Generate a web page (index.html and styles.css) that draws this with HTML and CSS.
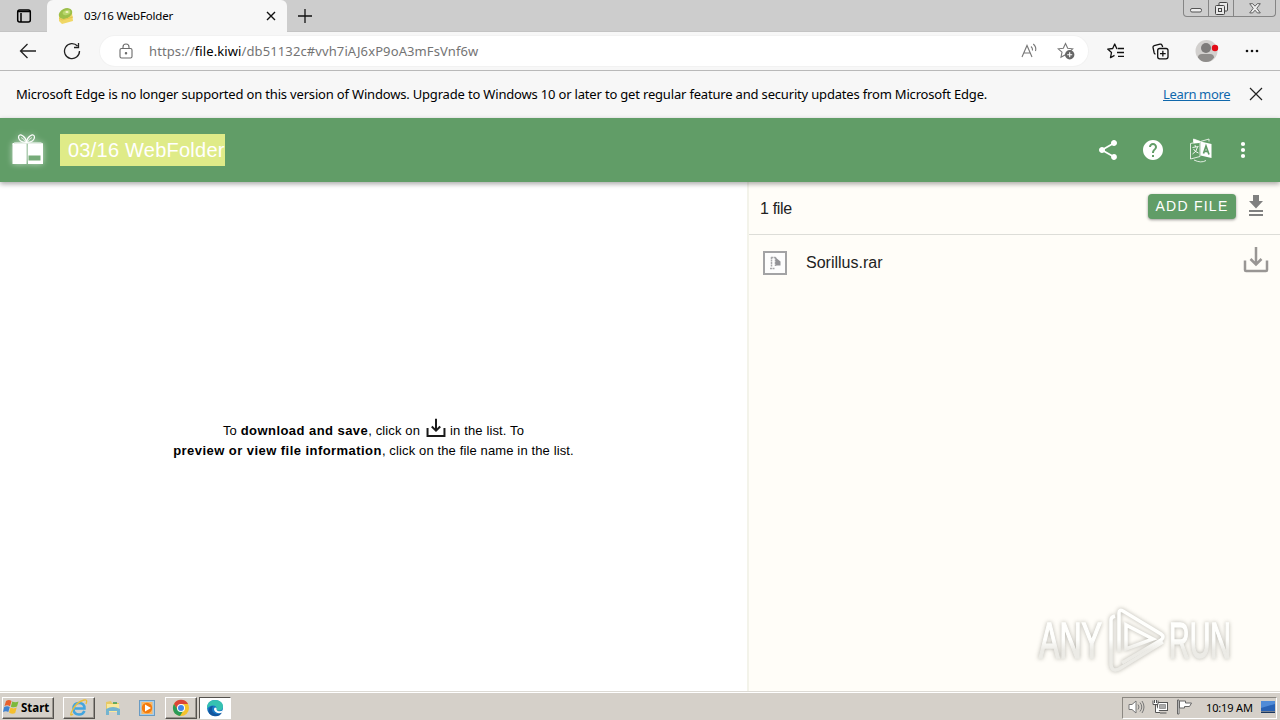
FILE: index.html
```
<!DOCTYPE html>
<html lang="en">
<head>
  <meta charset="UTF-8">
  <meta name="viewport" content="width=device-width, initial-scale=1.0">
  <title>03/16 WebFolder</title>
  <link rel="stylesheet" href="styles.css">
</head>
<body>
  <!-- Browser tabs -->
  <div class="tab-strip">
    <button class="tab-actions" aria-label="Tab actions">
      <svg width="16" height="16" viewBox="0 0 16 16" fill="none" stroke="#000" stroke-width="1.5">
        <rect x="1.7" y="2" width="12.6" height="12" rx="2"/>
        <path d="M2 3.5h12M5 5v9"/>
      </svg>
    </button>
    <div class="tab">
      <svg class="favicon" width="18" height="18" viewBox="0 0 18 18">
        <path d="M2 9L15 6l1 8-11 3-3-3z" fill="#f0d765"/>
        <ellipse cx="8.500" cy="6.500" rx="7" ry="5" transform="rotate(-25 8.500 6.500)" fill="#9cbf4a"/>
        <ellipse cx="9.500" cy="5.500" rx="4" ry="2.500" transform="rotate(-20 9.500 5.500)" fill="#b8d66c"/>
        <ellipse cx="10" cy="5" rx="1.600" ry="1" fill="#f4f5c4"/>
        <path d="M2 11l3 2 11-3" fill="none" stroke="#e2c44f"/>
      </svg>
      <span class="tab-title">03/16 WebFolder</span>
      <svg class="tab-close" width="10" height="10" viewBox="0 0 10 10" stroke="#111" stroke-width="1.4">
        <path d="M1 1l8 8M9 1L1 9"/>
      </svg>
    </div>
    <svg class="new-tab" width="16" height="16" viewBox="0 0 16 16" stroke="#111" stroke-width="1.3">
      <path d="M8 1v14M1 8h14"/>
    </svg>
    <div class="window-controls">
      <span class="control">
        <svg width="12" height="12" viewBox="0 0 12 12"><rect x=".5" y="6.5" width="11" height="3.5" rx="1.5" fill="#eee" stroke="#555"/></svg>
      </span>
      <span class="control">
        <svg width="13" height="13" viewBox="0 0 13 13" fill="#e8e8e8" stroke="#444"><rect x="4" y=".5" width="8.5" height="8.5" rx="1"/><rect x=".5" y="3.5" width="9" height="9" rx="1"/><rect x="3.5" y="6.5" width="3" height="3"/></svg>
      </span>
      <span class="control control-close">
        <svg width="12" height="11" viewBox="0 0 12 11"><path d="M.7.7h3L6 3.2 8.3.7h3L7.8 5.3l3.5 4.6h-3L6 7.2 3.700 9.900h-3L4.200 5.300z" fill="#eee" stroke="#555" stroke-width=".9"/></svg>
      </span>
    </div>
  </div>

  <!-- Toolbar with address bar -->
  <div class="toolbar">
    <svg class="nav-back" width="18" height="16" viewBox="0 0 18 16" fill="none" stroke="#222" stroke-width="1.3">
      <path d="M17 8H1.500M8.500 1L1.500 8l7 7"/>
    </svg>
    <svg class="nav-reload" width="18" height="18" viewBox="0 0 18 18" fill="none" stroke="#222" stroke-width="1.3">
      <path d="M14.500 4A7.500 7.500 0 1 0 16.500 9M15.500 1v4.500H11"/>
    </svg>
    <div class="address-bar">
      <svg class="lock" width="14" height="16" viewBox="0 0 14 16" fill="none" stroke="#6b6b6b" stroke-width="1.1">
        <rect x="1" y="5.500" width="12" height="9.500" rx="1.500"/>
        <path d="M4 5.500V4a3 3 0 0 1 6 0v1.500"/>
        <circle cx="7" cy="10.200" r=".7" fill="#6b6b6b"/>
      </svg>
      <span class="url">https://<b>file.kiwi</b>/db51132c#vvh7iAJ6xP9oA3mFsVnf6w</span>
      <svg class="read-aloud" width="17" height="16" viewBox="0 0 17 16" fill="none" stroke="#777" stroke-width="1.100">
        <path d="M1 14L6 2.500 11 14M2.800 10h6.400M10 3.500q1.800 1.500 1.500 4M12.300 1q3.400 3 2.200 7"/>
      </svg>
      <svg class="add-favorite" width="18" height="18" viewBox="0 0 18 18">
        <path d="M8.500 1.500l2.200 4.700 5 .6-3.700 3.400 1 5-4.500-2.500L4 15.200l1-5L1.200 6.800l5.100-.6z" fill="none" stroke="#777" stroke-width="1.100"/>
        <circle cx="12.700" cy="12.700" r="4.700" fill="#666"/>
        <path d="M12.700 10.200v5M10.200 12.700h5" stroke="#fff" stroke-width="1.100"/>
      </svg>
    </div>
    <svg class="favorites" width="18" height="16" viewBox="0 0 18 16" fill="none" stroke="#111" stroke-width="1.300" stroke-linejoin="round">
      <path d="M10.500 5.500h-.8L7.700 1 5.700 5.500l-5 .6L4.500 9.500l-1 5.200 4-2.300M11 5.500h6M10 9.500h7M11 13.300h6"/>
    </svg>
    <svg class="collections" width="17" height="17" viewBox="0 0 17 17" fill="none" stroke="#111" stroke-width="1.300">
      <path d="M3.500 11.200Q2.500 11 2.200 10L1 4.500Q.8 3 2.200 2.600L8 1.200q1.500-.3 2 1L10.700 4"/>
      <rect x="5.700" y="5.500" width="10.300" height="10.300" rx="2"/>
      <path d="M10.850 7.800v5.700M8 10.650h5.700"/>
    </svg>
    <svg class="profile" width="24" height="24" viewBox="0 0 24 24">
      <circle cx="11.500" cy="12" r="11" fill="#d2d0ce"/>
      <circle cx="11" cy="9" r="5" fill="#7d7b7a"/>
      <path d="M3 18.500q0-3.500 4-3.500h8q4 0 4 3.500-3 4.500-8 4.500t-8-4.500" fill="#8f8d8b"/>
      <circle cx="20" cy="9" r="3.200" fill="#e30b16"/>
    </svg>
    <svg class="more" width="14" height="4" viewBox="0 0 14 4" fill="#111">
      <circle cx="2" cy="2" r="1.300"/><circle cx="7" cy="2" r="1.300"/><circle cx="12" cy="2" r="1.300"/>
    </svg>
  </div>

  <div class="infobar">
    <span class="infobar-text">Microsoft Edge is no longer supported on this version of Windows. Upgrade to Windows 10 or later to get regular feature and security updates from Microsoft Edge.</span>
    <a class="infobar-link" href="#">Learn more</a>
    <svg class="infobar-close" width="14" height="14" viewBox="0 0 14 14" stroke="#222" stroke-width="1.200">
      <path d="M1 1l12 12M13 1L1 13"/>
    </svg>
  </div>

  <!-- Page header -->
  <header class="app-header">
    <svg class="gift-logo" width="36" height="36" viewBox="0 0 36 36">
      <path d="M2.500 11.500h14V32h-14zM18 11.500h15V32H18z" fill="#fff"/>
      <path d="M2.500 12l2-1h27l1 1" stroke="#fff" fill="none"/>
      <path d="M16.500 10.500q-8-.5-8-5.500.5-3.500 4.500-1 3 2 3.500 6.500.5-4.500 3.500-6.500 4-2.500 4.500 1 0 5-8 5.500" fill="none" stroke="#fff" stroke-width="1.200"/>
      <path d="M11 5.500q3 1 5 5M22 5.500q-3 1-5 5" fill="none" stroke="#fff" stroke-width=".7"/>
      <rect x="18.500" y="23.500" width="12" height="5" fill="#76ab79"/>
    </svg>
    <h1 class="folder-name">03/16 WebFolder</h1>
    <svg class="share" width="24" height="24" viewBox="0 0 24 24" fill="#fff">
      <path d="M18 16.080c-.76 0-1.440.3-1.960.77L8.910 12.700c.05-.23.09-.46.09-.7s-.04-.47-.09-.7l7.050-4.110c.54.5 1.250.81 2.040.81 1.660 0 3-1.340 3-3s-1.340-3-3-3-3 1.340-3 3c0 .24.04.47.09.7L8.040 9.810C7.500 9.310 6.790 9 6 9c-1.660 0-3 1.340-3 3s1.340 3 3 3c.79 0 1.500-.31 2.040-.81l7.120 4.160c-.05.21-.08.43-.08.65 0 1.610 1.310 2.920 2.920 2.920s2.920-1.310 2.920-2.920-1.310-2.920-2.920-2.920z"/>
    </svg>
    <svg class="help" width="24" height="24" viewBox="0 0 24 24" fill="#fff">
      <path d="M12 2C6.480 2 2 6.480 2 12s4.480 10 10 10 10-4.480 10-10S17.520 2 12 2zm1 17h-2v-2h2v2zm2.070-7.750l-.9.920C13.450 12.900 13 13.500 13 15h-2v-.5c0-1.100.45-2.100 1.170-2.830l1.240-1.260c.37-.36.59-.86.59-1.410 0-1.100-.9-2-2-2s-2 .9-2 2H8c0-2.210 1.790-4 4-4s4 1.790 4 4c0 .88-.36 1.680-.93 2.250z"/>
    </svg>
    <svg class="translate" width="24" height="26" viewBox="0 0 24 26">
      <path d="M1.500 6.500L11 4.500v15l-9.500 2.500zM4.500 5V2l7 2.500L20 2v2.500M5 23q7 3.500 12 .5" fill="none" stroke="#fff" stroke-width=".8"/>
      <path d="M4.500 2l7 2.500-1 1.500-6 .5z" fill="#fff"/>
      <path d="M11.500 4.500L22.500 7v14l-11-2.500z" fill="#fff"/>
      <path d="M3.500 10.500l6-1M6 8l.5 2M8.500 10q-1 5-5 7M4.500 12q1.500 3 5 4" fill="none" stroke="#fff" stroke-width=".9"/>
      <path d="M14.500 16.500L17 9l3 8.500M15.500 14.200l3.500.5" fill="none" stroke="#619b66" stroke-width="1.700"/>
    </svg>
    <svg class="menu" width="6" height="18" viewBox="0 0 6 18" fill="#fff">
      <circle cx="3" cy="3" r="2.100"/><circle cx="3" cy="9" r="2.100"/><circle cx="3" cy="15" r="2.100"/>
    </svg>
  </header>

  <main class="content">
    <section class="preview">
      <p class="hint">
        <span class="hint-line"><span>To <b>download and save</b>, click on</span>
          <svg class="hint-icon" width="20" height="20" viewBox="0 0 26 26" fill="none" stroke="#1a1a1a" stroke-width="2.600">
            <path d="M2 13v10.500h22V13M13 1v15M7.500 11l5.500 5.500 5.500-5.500"/>
          </svg>
          <span>in the list. To</span></span>
        <span class="hint-line"><span><b>preview or view file information</b>, click on the file name in the list.</span></span>
      </p>
    </section>

    <section class="files">
      <div class="files-head">
        <span class="count">1 file</span>
        <button class="add-file">ADD FILE</button>
        <svg class="download-all" width="16" height="22" viewBox="0 0 16 22" fill="#808080">
          <path d="M5 0h6v6h4l-7 7.500L1 6h4zM1 15h14v2H1zM1 19h14v2H1z"/>
        </svg>
      </div>
      <div class="file-row">
        <svg class="file-icon" width="24" height="24" viewBox="0 0 24 24">
          <rect x="1" y="1" width="22" height="22" fill="#fdfdfd" stroke="#a3a3a5" stroke-width="2"/>
          <path d="M8.500 6v10M7 17.500h5M8 6.500h4.500M12.500 6v9" stroke="#a7a7aa" stroke-width="1.500" stroke-dasharray="2 .5" fill="none"/>
          <path d="M12.500 6.500l5 4v4h-5z" fill="#929296"/>
        </svg>
        <span class="file-name">Sorillus.rar</span>
        <svg class="download" width="26" height="26" viewBox="0 0 26 26" fill="none" stroke="#999694" stroke-width="2.500">
          <path d="M2 13.500v9.500q0 1 1 1h20q1 0 1-1v-9.500M13 0v17M7.500 12l5.500 5.500 5.500-5.500"/>
        </svg>
      </div>
    </section>
  </main>

  <svg class="watermark" width="214" height="72" viewBox="0 0 214 72">
    <defs>
      <linearGradient id="fade" x1="0" y1="0" x2="0" y2="72" gradientUnits="userSpaceOnUse">
        <stop offset=".45" stop-color="#fffffd"/>
        <stop offset=".6" stop-color="#ecebe6"/>
      </linearGradient>
    </defs>
    <g class="watermark-text">
      <text x="5" y="51" textLength="63" lengthAdjust="spacingAndGlyphs">ANY</text>
      <text x="135" y="51" textLength="62" lengthAdjust="spacingAndGlyphs">RUN</text>
    </g>
    <path class="watermark-mark" d="M77 54V13q0-3 4-4M85 45V6q0-4 4-2l38 23q4 3 0 6L88 56M92 42V18l27 14z"/>
    <path class="watermark-mark" d="M77 54v4q1 7 8 4l44-27"/>
  </svg>

  <!-- Windows taskbar -->
  <footer class="taskbar">
    <button class="start">
      <svg width="17" height="16" viewBox="0 0 17 16">
        <path d="M3 2q3-2 5.500 0L7 7.300Q4.500 5.500 1.500 7z" fill="#e8602c"/>
        <path d="M9.300 2.400q3 1.600 6.200 0L14 7.500q-3 1.500-6.200.2z" fill="#7db93c"/>
        <path d="M1.200 8q3-1.700 5.600 0L5.300 13Q3 11.500 0 13z" fill="#3f82d0"/>
        <path d="M7.500 8.600q3 1.600 6.200 0L12.200 14q-3 1.500-6.200-.6z" fill="#f5bf2e"/>
      </svg>
      <span>Start</span>
    </button>
    <button class="task task-ie" aria-label="Internet Explorer">
      <svg width="18" height="18" viewBox="0 0 18 18" fill="none">
        <path d="M14.500 12q-1.500 3.500-5.500 3.500-5.500 0-5.500-6Q3.500 4 9 4t5.500 5.500H5" stroke="#43a5df" stroke-width="2.500"/>
        <path d="M3 15q-4 3-1-3Q6 3 14 1q4-1 2 4" stroke="#e9bd3a" stroke-width="1.300"/>
      </svg>
    </button>
    <span class="task task-explorer">
      <svg width="18" height="18" viewBox="0 0 18 18">
        <path d="M2 3l5-1 1 2h7v9H2z" fill="#e7c965"/>
        <path d="M3 5h12v8H3z" fill="#f9e89c"/>
        <path d="M2 10q7-4 14 0v6h-3v-4H5v4H2z" fill="#74b4cf"/>
        <path d="M9 4h4" stroke="#3a9d52" stroke-width="1.500"/>
      </svg>
    </span>
    <span class="task task-player">
      <svg width="18" height="18" viewBox="0 0 18 18">
        <rect x="1.500" y="1.500" width="15" height="15" fill="#a8cde9" stroke="#699bc3"/>
        <rect x="3.500" y="3" width="11" height="12" fill="#f9b765"/>
        <circle cx="9" cy="9" r="5.200" fill="#f47b0c"/>
        <path d="M7 5.500l6 3.500-6 3.500z" fill="#fff"/>
      </svg>
    </span>
    <button class="task task-chrome" aria-label="Chrome">
      <svg width="18" height="18" viewBox="0 0 18 18">
        <circle cx="9" cy="9" r="8" fill="#f5c32c"/>
        <path d="M2 5a8 8 0 0 1 14 0H9L6 11z" fill="#db4437"/>
        <path d="M2 5a8 8 0 0 0 6 12l4-6.500-6 .5z" fill="#2a9b57"/>
        <circle cx="9" cy="9" r="4" fill="#fff"/>
        <circle cx="9" cy="9" r="3" fill="#4285e8"/>
      </svg>
    </button>
    <button class="task task-edge active" aria-label="Edge">
      <svg width="18" height="18" viewBox="0 0 18 18">
        <circle cx="9" cy="9" r="8" fill="#1778c5"/>
        <path d="M1 8Q2 1 9 1q7.500 0 8 6.500 0 4-4 4-3 0-2.500-2 0-3-3.500-3-4 0-6 3.500z" fill="#36c2b1"/>
        <path d="M7 7q-3 5 2 7.500 3 1.500 7-1-3 5-8.500 3.500Q1 15 3 10q1-3 4-3" fill="#13569e"/>
        <path d="M10.500 9q-.5 3 2.500 3.300 2.500.2 4-1.300l-1 2.500q-4 2-7-1-2-2.500 0-4z" fill="#fff"/>
      </svg>
    </button>
    <div class="tray">
      <svg class="tray-volume" width="17" height="16" viewBox="0 0 17 16" stroke="#777" fill="none">
        <path d="M1 5.500h3L8 2v12l-4-3.500H1z" fill="#fff"/>
        <path d="M10 5.500q2 2.500 0 5M12 3.500q3.500 4.500 0 9M14 2q4 6 0 12"/>
      </svg>
      <svg class="tray-network" width="17" height="16" viewBox="0 0 17 16" stroke="#555" fill="#fff">
        <rect x="5.500" y="3.500" width="10" height="8"/>
        <path d="M7.500 5.500h6v4h-6z" fill="#aaa" stroke="#999"/>
        <path d="M8 14h6.500M1 1.500v4h5v-4M3.500 5.500v8H8"/>
        <path d="M2.500 1v3M4.500 1v3"/>
      </svg>
      <svg class="tray-flag" width="17" height="16" viewBox="0 0 17 16" stroke="#666" fill="#fff">
        <path d="M1.500 1h1.500v14H1.500zM3.500 2h6v2h6l-2 3.500H8.500v1.500h-5z"/>
      </svg>
      <span class="clock">10:19 AM</span>
      <svg class="show-desktop" width="16" height="14" viewBox="0 0 16 14">
        <path d="M1 1h14v10H1z" fill="#2862b5"/>
        <path d="M1 1h14v3L1 8z" fill="#4f8bd8"/>
        <path d="M1 11.500h14v1.500H1z" fill="#18365f"/>
      </svg>
    </div>
  </footer>
</body>
</html>
```
FILE: styles.css
```
:root {
  --green: #619d67;
  --cream: #fffdf8;
  --chrome: #f7f7f7;
  --strip: #cdcdcd;
  --taskbar: #d5d0c9;
}

* {
  margin: 0;
  padding: 0;
  box-sizing: border-box;
}

body {
  width: 1280px;
  height: 720px;
  overflow: hidden;
  display: flex;
  flex-direction: column;
  background: white;
  color: #000;
  font-family: "Liberation Sans", Arial, sans-serif;
}

svg {
  display: block;
  flex: none;
}

button {
  border: none;
  background: none;
  font: inherit;
}

span, a, h1 {
  white-space: nowrap;
}

/* Browser chrome */
.tab-strip,
.toolbar,
.infobar {
  flex: none;
  display: flex;
  align-items: center;
  font-family: "Noto Sans", "Open Sans", sans-serif;
}

.tab-strip {
  height: 32px;
  background: var(--strip);
  border-bottom: 1px solid #c4c4c4;
}

.tab-actions {
  margin-left: 16px;
}

.tab {
  width: 240px;
  height: 32px;
  margin: 0 0 -1px 15px;
  padding-left: 10px;
  display: flex;
  align-items: center;
  background: var(--chrome);
  border-radius: 6px 6px 0 0;
}

.tab-title {
  width: 182px;
  margin: -2px 0 0 9px;
  font-size: 11.5px;
  letter-spacing: -0.18px;
}

.new-tab {
  margin-left: 10px;
}

.window-controls {
  display: flex;
  align-self: flex-start;
  height: 17px;
  margin: 0 4px 0 auto;
  border: 1px solid #858585;
  border-top: none;
  border-radius: 0 0 4px 4px;
}

.control {
  width: 25px;
  display: grid;
  place-items: center;
  border-right: 1px solid #858585;
}

.control-close {
  width: 41px;
  border-right: none;
}

.toolbar {
  height: 39px;
  background: var(--chrome);
  border-bottom: 1px solid #b9b9b9;
}

.nav-back {
  margin-left: 19px;
}

.nav-reload {
  margin-left: 26px;
}

.address-bar {
  width: 988px;
  height: 30px;
  margin-left: 19px;
  padding-left: 19px;
  display: flex;
  align-items: center;
  background: white;
  border-radius: 15px;
  box-shadow: 0 0 0 1px #f2f2f2;
}

.url {
  width: 872px;
  margin-left: 16px;
  font-size: 13px;
  letter-spacing: 0.11px;
  color: #747474;
}

.url b {
  font-weight: 400;
  color: #000;
}

.add-favorite {
  margin-left: 19px;
}

.favorites {
  margin-left: 19px;
}

.collections {
  margin-left: 27px;
}

.profile {
  margin-left: 26px;
}

.more {
  margin-left: 26px;
}

.infobar {
  height: 47px;
  padding: 0 0 2px 16px;
  background: var(--chrome);
}

.infobar-text {
  width: 1147px;
  font-size: 13px;
  letter-spacing: -0.18px;
}

.infobar-link {
  width: 68px;
  font-size: 13px;
  letter-spacing: -0.35px;
  color: #1068ac;
}

.infobar-close {
  margin-left: 18px;
}

/* Page */
.app-header {
  flex: none;
  height: 64px;
  display: flex;
  align-items: center;
  position: relative;
  background: var(--green);
  box-shadow: 0 2px 5px rgba(0, 0, 0, 0.35);
}

.gift-logo {
  margin: -1px 0 0 10px;
  filter: drop-shadow(0 0 3px rgba(255, 255, 255, 0.6));
}

.folder-name {
  width: 165px;
  height: 32px;
  margin: 0 auto 0 14px;
  padding-left: 8px;
  background: #dfeb88;
  color: white;
  font-size: 20px;
  font-weight: 400;
  letter-spacing: 0.24px;
  line-height: 32px;
}

.help {
  margin-left: 21px;
}

.translate {
  margin-left: 24px;
}

.menu {
  margin: 0 34px 0 27px;
}

.content {
  flex: 1;
  display: flex;
  min-height: 0;
}

.preview {
  width: 747px;
  display: grid;
  place-items: center;
}

.hint {
  margin-top: 8px;
  font-size: 13px;
  letter-spacing: 0.13px;
}

.hint b {
  letter-spacing: 0.45px;
}

.hint-line {
  display: flex;
  align-items: center;
  justify-content: center;
  height: 20px;
}

.hint-icon {
  margin: -5px 4px 0 6px;
}

.files {
  flex: 1;
  border-left: 2px solid #f3f3ea;
  background: var(--cream);
}

.files-head {
  height: 53px;
  padding-left: 11px;
  display: flex;
  border-bottom: 1px solid #ddddd8;
}

.count {
  margin: 18px auto 0 0;
  font-size: 16px;
  letter-spacing: -0.35px;
  color: #222;
}

.add-file {
  width: 88px;
  height: 25px;
  margin: 12px 12px 0 0;
  padding-bottom: 2px;
  border-radius: 4px;
  background: var(--green);
  color: white;
  font-size: 14px;
  letter-spacing: 1.25px;
  box-shadow: 0 1px 3px rgba(0, 0, 0, 0.4);
}

.download-all {
  margin: 13px 16px 0 0;
}

.file-row {
  height: 56px;
  padding-left: 14px;
  display: flex;
  align-items: center;
}

.file-name {
  margin: 0 auto 0 19px;
  font-size: 16px;
  color: #222;
}

.download {
  margin: -7px 11px 0 0;
}

.watermark {
  position: absolute;
  left: 1034px;
  top: 607px;
  filter: drop-shadow(0 0 2px rgba(90, 90, 80, 0.45));
}

.watermark-text {
  fill: url(#fade);
  stroke: url(#fade);
  stroke-width: 1.5;
  font-size: 50px;
}

.watermark-mark {
  fill: none;
  stroke: url(#fade);
  stroke-width: 3.5;
}

/* Taskbar */
.taskbar {
  flex: none;
  height: 29px;
  padding: 3px 3px 0 2px;
  display: flex;
  align-items: center;
  background: var(--taskbar);
  border-top: 1px solid #dddad4;
  box-shadow: inset 0 1px #fff;
}

.start,
.task-ie,
.task-chrome {
  border: 1px solid;
  border-color: #fff #55524e #55524e #fff;
  box-shadow: inset -1px -1px #99958e;
}

.start {
  width: 52px;
  height: 22px;
  padding-bottom: 1px;
  display: flex;
  align-items: center;
  gap: 1px;
  font-family: "Noto Sans", sans-serif;
  font-size: 11.5px;
  font-weight: 700;
}

.task {
  width: 32px;
  height: 22px;
  display: grid;
  place-items: center;
}

.task-ie {
  margin-left: 9px;
}

.task-explorer,
.task-player,
.task-chrome,
.task-edge {
  margin-left: 2px;
}

.active {
  background: white;
  border: 1px solid;
  border-color: #55524e #fff #fff #55524e;
}

.tray {
  width: 155px;
  height: 22px;
  margin-left: auto;
  padding: 0 0 1px 5px;
  display: flex;
  align-items: center;
  border: 1px solid;
  border-color: #8c8882 #fff #fff #8c8882;
}

.tray-network,
.tray-flag {
  margin-left: 7px;
}

.clock {
  width: 54px;
  margin-left: 13px;
  font-family: "Noto Sans", sans-serif;
  font-size: 11px;
  letter-spacing: -0.15px;
}
```
